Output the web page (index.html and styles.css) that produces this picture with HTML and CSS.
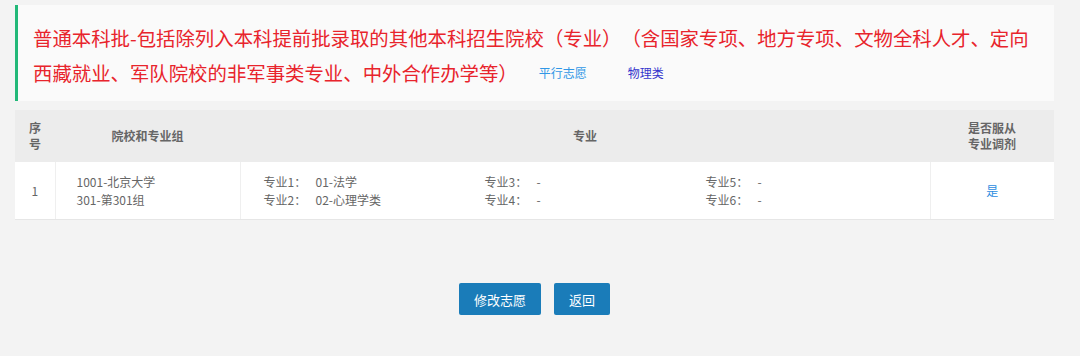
FILE: index.html
```html
<!DOCTYPE html>
<html lang="zh-CN">
<head>
    <meta charset="UTF-8">
    <meta name="viewport" content="width=device-width, initial-scale=1.0">
    <link rel="stylesheet" href="styles.css">
</head>
<body>
    <div class="wrap">
        <div class="batch-tip">
            <span>普通本科批-包括除列入本科提前批录取的其他本科招生院校（专业）（含国家专项、地方专项、文物全科人才、定向</span><br><span>西藏就业、军队院校的非军事类专业、中外合作办学等）</span><span class="tag tag-type">平行志愿</span><span class="tag tag-subject">物理类</span>
        </div>

        <table class="wish-table">
            <thead>
                <tr>
                    <th class="col-no">序<br>号</th>
                    <th class="col-school">院校和专业组</th>
                    <th class="col-major">专业</th>
                    <th class="col-adjust">是否服从<br>专业调剂</th>
                </tr>
            </thead>
            <tbody>
                <tr>
                    <td class="col-no">1</td>
                    <td class="col-school">1001-北京大学<br>301-第301组</td>
                    <td class="col-major">
                        <div class="major-grid">
                            <div><span class="major-label">专业1：</span>01-法学</div>
                            <div><span class="major-label">专业3：</span>-</div>
                            <div><span class="major-label">专业5：</span>-</div>
                            <div><span class="major-label">专业2：</span>02-心理学类</div>
                            <div><span class="major-label">专业4：</span>-</div>
                            <div><span class="major-label">专业6：</span>-</div>
                        </div>
                    </td>
                    <td class="col-adjust"><span class="yes">是</span></td>
                </tr>
            </tbody>
        </table>

        <div class="actions">
            <button class="btn">修改志愿</button>
            <button class="btn">返回</button>
        </div>
    </div>
</body>
</html>
```

FILE: styles.css
```css
body {
    margin: 0;
    background-color: #f3f3f3;
    font-family: "Noto Sans CJK SC", "Liberation Sans", sans-serif;
    height: 356px;
    overflow: hidden;
}

.wrap {
    width: 1039px;
    margin-left: 15px;
    padding-top: 5px;
}

.batch-tip {
    background-color: #fafafa;
    border-left: 3px solid #21b878;
    padding: 15px 15px 11px 15px;
    font-size: 19.4px;
    line-height: 35px;
    color: #e8242c;
    text-spacing-trim: space-all;
}

.tag {
    font-size: 12px;
    line-height: 12px;
    vertical-align: 3px;
}

.tag-type {
    color: #3097e6;
    margin-left: 21px;
}

.tag-subject {
    color: #3434cc;
    margin-left: 41px;
}

.wish-table {
    width: 100%;
    margin-top: 9px;
    border-collapse: collapse;
    table-layout: fixed;
    font-size: 12px;
}

.wish-table th {
    background-color: #ececec;
    color: #666;
    font-weight: bold;
    height: 52px;
    line-height: 16px;
    padding: 0;
    text-align: center;
}

.wish-table td {
    background-color: #fff;
    color: #666;
    height: 57px;
    line-height: 18px;
    padding: 0;
    border-left: 1px solid #efefef;
    border-bottom: 1px solid #e6e6e6;
}

.wish-table td:first-child {
    border-left: none;
}

.col-no {
    width: 40px;
}

td.col-no {
    text-align: center;
}

.col-school {
    width: 185px;
}

td.col-school {
    padding-left: 21px;
    text-align: left;
}

.col-major {
    width: 690px;
}

td.col-major {
    padding-left: 23px;
}

.col-adjust {
    width: 124px;
}

td.col-adjust {
    text-align: center;
}

.major-grid {
    display: grid;
    grid-template-columns: 221px 221px 221px;
}

.major-label {
    display: inline-block;
    width: 52px;
}

.yes {
    color: #2d8de0;
}

.actions {
    display: flex;
    justify-content: center;
    gap: 13px;
    margin-top: 63px;
}

.btn {
    height: 32px;
    padding: 0 15px;
    font-family: "Noto Sans CJK SC", sans-serif;
    font-size: 13px;
    color: #fff;
    background-color: #1a7cb9;
    border: none;
    border-radius: 2px;
    cursor: pointer;
}

.btn:hover {
    background-color: #1670a8;
}
```
